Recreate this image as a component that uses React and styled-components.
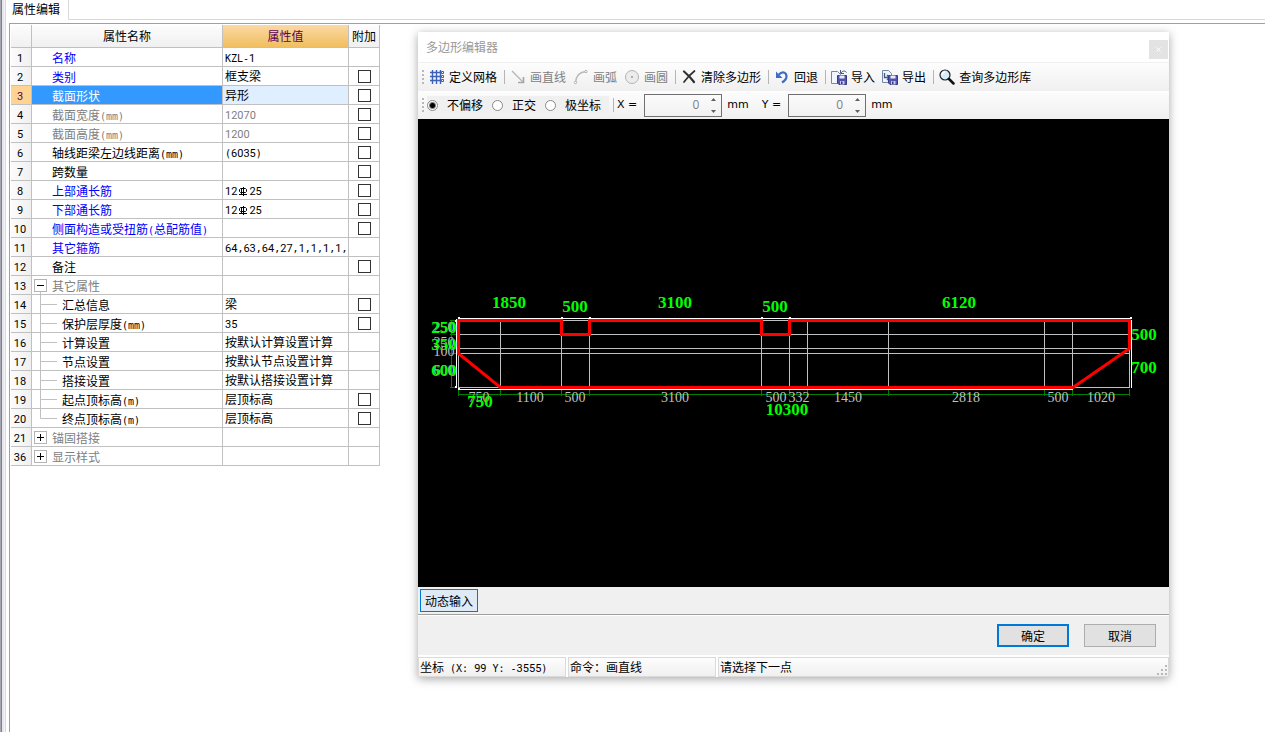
import React from "react";
import styled, { createGlobalStyle, css } from "styled-components";

const Global = createGlobalStyle`
  *, *::before, *::after { box-sizing: border-box; }
  body {
    margin: 0;
    background: #fff;
    color: #000;
    font: 12px/18px "Noto Sans CJK SC", sans-serif;
  }
  button, input { font: inherit; color: inherit; }
`;

const line = "#c0c0c0";

/* ---------- mixed Chinese / half-width text ---------- */

const Digits = styled.span`
  font-family: Roboto, sans-serif;
  font-size: 11px;
  line-height: 1;
`;

const Half = styled.span`
  font-family: "DejaVu Sans Mono", monospace;
  font-size: 10px;
  line-height: 1;
  white-space: pre;
`;

function Mixed({ children }) {
  return String(children)
    .split(/([0-9]+|Φ|[ -/:-~]+)/)
    .filter(Boolean)
    .map((part, i) => {
      if (part === "Φ") return <Rebar key={i} />;
      if (/^[0-9]/.test(part)) return <Digits key={i}>{part}</Digits>;
      if (/^[ -~]/.test(part)) return <Half key={i}>{part}</Half>;
      return part;
    });
}

const RebarSvg = styled.svg`
  vertical-align: -1px;
  margin: 0 1px;
`;

function Rebar() {
  return (
    <RebarSvg width="10" height="9" viewBox="0 0 10 9" fill="none" stroke="#000" role="img" aria-label="钢筋级别">
      <path d="M2.5 1.5h5l1 1v2l-1 1h-5l-1-1v-2z" />
      <path d="M5.5 0v9M3.5 2v6M1 7.5h8" />
    </RebarSvg>
  );
}

/* ---------- page frame ---------- */

const Page = styled.div`
  min-height: 100vh;
  display: flex;
`;

const Edge = styled.div`
  width: 6px;
  flex: none;
  background: linear-gradient(90deg, #a5a5ae 0 1px, #7f828c 1px 2px, #e6e6f0 2px 4px, #f4f4f8 4px 5px, #d9d9d9 5px 6px);
`;

const Main = styled.div`
  flex: 1;
  min-width: 0;
  display: flex;
  flex-direction: column;
`;

const TabBar = styled.div`
  display: flex;
  height: 20px;
  &::after {
    content: "";
    flex: 1;
    border-bottom: 1px solid #d9d9d9;
  }
`;

const Tab = styled.div`
  width: 63px;
  padding-left: 6px;
  border-right: 1px solid #d9d9d9;
`;

const Panel = styled.div`
  flex: 1;
  margin: 3px 0 0 3px;
  padding: 1px 0 0 1px;
  border-top: 1px solid #a0a0a0;
  border-left: 1px solid #a0a0a0;
  display: flex;
  align-items: flex-start;
`;

/* ---------- property table ---------- */

const Table = styled.table`
  flex: none;
  width: 369px;
  table-layout: fixed;
  border-collapse: separate;
  border-spacing: 0;
`;

const Col = styled.col`
  width: ${(p) => p.$w}px;
`;

const cell = css`
  height: 19px;
  padding: 0;
  border-right: 1px solid ${line};
  border-bottom: 1px solid ${line};
  font-weight: 400;
  line-height: 18px;
  white-space: nowrap;
  overflow: hidden;
`;

const HeadCell = styled.th`
  ${cell}
  height: 23px;
  background: linear-gradient(#fdfdfd, #f0f0f0);
  ${(p) =>
    p.$active &&
    css`
      background: linear-gradient(#fad9a3, #f1be5f);
      color: #5a005a;
    `}
`;

const NumCell = styled.th`
  ${cell}
  padding-right: 2px;
  background: ${(p) => (p.$active ? "#ffd391" : "linear-gradient(90deg, #fcfcfc, #f0f0f0)")};
  color: ${(p) => (p.$active ? "#5a005a" : "#000")};
`;

const tones = { blue: "#0000ff", gray: "#808080", black: "#000" };

const NameCell = styled.td`
  ${cell}
  color: ${(p) => (p.$active ? "#fff" : tones[p.$tone])};
  background: ${(p) => (p.$active ? "#3399ff" : "#fff")};
`;

const NameLine = styled.div`
  display: flex;
  height: 18px;
  padding-left: ${(p) => (p.$plain ? 20 : 0)}px;
  line-height: 20px;
`;

const ValueCell = styled.td`
  ${cell}
  padding-left: 2px;
  color: ${(p) => (p.$tone === "gray" ? "#808080" : "#000")};
  background: ${(p) => (p.$active ? "#dfefff" : "#fff")};
`;

const CheckCell = styled.td`
  ${cell}
  text-align: center;
`;

const Check = styled.input`
  appearance: none;
  display: block;
  width: 13px;
  height: 13px;
  margin: 0 auto;
  border: 1px solid #333;
  background: #fff;
`;

const Toggle = styled.button`
  flex: none;
  width: 20px;
  height: 18px;
  padding: 0;
  border: 0;
  background: none;
  svg { display: block; }
`;

const Branch = styled.svg`
  flex: none;
`;

const rows = [
  { n: 1, name: "名称", value: "KZL-1", tone: "blue" },
  { n: 2, name: "类别", value: "框支梁", tone: "blue", check: true },
  { n: 3, name: "截面形状", value: "异形", tone: "blue", check: true, active: true },
  { n: 4, name: "截面宽度(mm)", value: "12070", tone: "gray", check: true },
  { n: 5, name: "截面高度(mm)", value: "1200", tone: "gray", check: true },
  { n: 6, name: "轴线距梁左边线距离(mm)", value: "(6035)", check: true },
  { n: 7, name: "跨数量", value: "", check: true },
  { n: 8, name: "上部通长筋", value: "12Φ25", tone: "blue", check: true },
  { n: 9, name: "下部通长筋", value: "12Φ25", tone: "blue", check: true },
  { n: 10, name: "侧面构造或受扭筋(总配筋值)", value: "", tone: "blue", check: true },
  { n: 11, name: "其它箍筋", value: "64,63,64,27,1,1,1,1,", tone: "blue" },
  { n: 12, name: "备注", value: "", check: true },
  { n: 13, name: "其它属性", value: "", tone: "gray", toggle: "open" },
  { n: 14, name: "汇总信息", value: "梁", check: true, branch: "mid" },
  { n: 15, name: "保护层厚度(mm)", value: "35", check: true, branch: "mid" },
  { n: 16, name: "计算设置", value: "按默认计算设置计算", branch: "mid" },
  { n: 17, name: "节点设置", value: "按默认节点设置计算", branch: "mid" },
  { n: 18, name: "搭接设置", value: "按默认搭接设置计算", branch: "mid" },
  { n: 19, name: "起点顶标高(m)", value: "层顶标高", check: true, branch: "mid" },
  { n: 20, name: "终点顶标高(m)", value: "层顶标高", check: true, branch: "end" },
  { n: 21, name: "锚固搭接", value: "", tone: "gray", toggle: "closed" },
  { n: 36, name: "显示样式", value: "", tone: "gray", toggle: "closed" },
];

function TreeToggle({ state, label }) {
  const open = state === "open";
  return (
    <Toggle type="button" aria-label={label} aria-expanded={open}>
      <svg width="20" height="18" fill="none">
        <rect x="2.5" y="3.5" width="12" height="12" fill="#fff" stroke="#b4b4b4" />
        <path d={open ? "M5 9.5h7" : "M5 9.5h7M8.5 6v7"} stroke="#000" />
        {open && <path d="M8.5 16v2" stroke={line} />}
      </svg>
    </Toggle>
  );
}

function PropertyRow({ row }) {
  const { n, name, value, tone = "black", check, active, toggle, branch } = row;
  return (
    <tr>
      <NumCell scope="row" $active={active}>
        <Mixed>{n}</Mixed>
      </NumCell>
      <NameCell $tone={tone} $active={active}>
        <NameLine $plain={!toggle && !branch}>
          {toggle && <TreeToggle state={toggle} label={name} />}
          {branch && (
            <Branch width="30" height="18" stroke={line} fill="none">
              <path d={branch === "end" ? "M8.5 0v9.5h16.5" : "M8.5 0v18M8.5 9.5h16.5"} />
            </Branch>
          )}
          <span>
            <Mixed>{name}</Mixed>
          </span>
        </NameLine>
      </NameCell>
      <ValueCell $tone={tone} $active={active}>
        <Mixed>{value}</Mixed>
      </ValueCell>
      <CheckCell>{check && <Check type="checkbox" aria-label={`附加 ${name}`} />}</CheckCell>
    </tr>
  );
}

/* ---------- dialog ---------- */

const Dialog = styled.section`
  flex: 1;
  min-width: 0;
  margin: 7px 96px 24px 38px;
  background: #f0f0f0;
  box-shadow: 0 2px 9px rgba(0, 0, 0, 0.35);
`;

const TitleBar = styled.header`
  display: flex;
  justify-content: space-between;
  align-items: center;
  height: 31px;
  padding: 0 1px 0 8px;
  background: #fff;
  color: #999;
  border-bottom: 1px solid #f0f0f0;
`;

const CloseButton = styled.button`
  align-self: flex-end;
  width: 19px;
  height: 19px;
  margin-bottom: 3px;
  padding: 0;
  border: 0;
  background: #e3e3e3;
  svg { display: block; margin: auto; }
`;

const ToolBar = styled.div`
  display: flex;
  align-items: center;
  height: 28px;
  padding-left: 4px;
  background: linear-gradient(#fdfdfd, #efefef);
  white-space: nowrap;
`;

const Grip = styled.span`
  width: 2px;
  height: 14px;
  margin-right: ${(p) => p.$gap}px;
  background: repeating-linear-gradient(#b8b8b8 0 2px, transparent 2px 4px);
`;

const Tool = styled.button`
  display: flex;
  align-items: center;
  gap: 4px;
  height: 24px;
  padding: 0 3px 0 4px;
  border: 0;
  background: none;
  color: ${(p) => (p.disabled ? "#808080" : "#000")};
  svg { flex: none; }
`;

const Separator = styled.span`
  width: 1px;
  height: 14px;
  margin: 0 1px 0 4px;
  background: #b5b5b5;
`;

const RadioGroup = styled.div`
  display: flex;
  align-items: center;
  width: 182px;
  height: 18px;
  background: #f0f0f0;
`;

const RadioLabel = styled.label`
  display: flex;
  align-items: center;
  gap: 9px;
  padding-right: 9px;
`;

const Radio = styled.input`
  appearance: none;
  flex: none;
  width: 11px;
  height: 11px;
  margin: 0;
  border: 1px solid #888;
  border-radius: 50%;
  background: #fff;
  &:checked { background: radial-gradient(#000 0 2px, #fff 4px); }
`;

const Unit = styled.span`
  font: 11px/18px "DejaVu Sans", sans-serif;
  padding: 0 ${(p) => (p.$wide ? 11 : 7)}px 0 ${(p) => (p.$wide ? 5 : 2)}px;
`;

const NumberLabel = styled.label`
  display: flex;
  align-items: center;
`;

const Spin = styled.span`
  display: flex;
  align-items: center;
  width: 78px;
  height: 23px;
  padding-right: 4px;
  border: 1px solid #707070;
  background: linear-gradient(#fbfbfb, #f1f1f1);
`;

const SpinInput = styled.input`
  flex: 1;
  min-width: 0;
  height: 20px;
  padding: 0 11px 0 0;
  border: 0;
  outline: 0;
  background: none;
  color: #808080;
  font: 12px/20px "Open Sans", sans-serif;
  text-align: right;
`;

const Canvas = styled.svg`
  display: block;
  width: 100%;
  height: auto;
  background: #000;
`;

const DimText = styled.text`
  font: bold 17px "Liberation Serif", serif;
  fill: #0f0;
  text-anchor: middle;
`;

const GridText = styled.text`
  font: 14px "Liberation Serif", serif;
  fill: #c0c0c0;
  text-anchor: middle;
`;

const InputBar = styled.div`
  height: 28px;
  padding: 2px;
  border-bottom: 1px solid #a0a0a0;
`;

const DynamicButton = styled.button`
  display: block;
  width: 58px;
  height: 23px;
  padding: 0;
  border: 1px solid #0078d7;
  background: #deebf7;
`;

const Footer = styled.footer`
  display: flex;
  justify-content: flex-end;
  gap: 15px;
  padding: 8px 13px 8px;
  border-top: 1px solid #fff;
`;

const DialogButton = styled.button`
  width: 72px;
  height: 23px;
  padding: 0;
  background: #e1e1e1;
  border: ${(p) => (p.$primary ? "2px solid #0078d7" : "1px solid #adadad")};
`;

const StatusBar = styled.div`
  display: flex;
  gap: 2px;
  height: 22px;
  padding-top: 2px;
  background: #fff;
`;

const StatusItem = styled.div`
  flex: ${(p) => (p.$fill ? "1" : "0 0 148px")};
  display: flex;
  justify-content: space-between;
  align-items: flex-end;
  padding-left: 1px;
  border: 1px solid #dadada;
  background: linear-gradient(#fdfdfd, #f0f0f0);
  white-space: nowrap;
`;

/* ---------- icons ---------- */

const Icon = ({ children }) => (
  <svg width="16" height="16" viewBox="0 0 16 16" fill="none" aria-hidden="true">
    {children}
  </svg>
);

const GridIcon = () => (
  <Icon>
    <path d="M3.5 1v14M7.5 1v14M11.5 1v14M1 3.5h14M1 7.5h14M1 11.5h14" stroke="#3b62b5" strokeWidth="1.4" />
    <path d="M12.5 2.5h2v2h-2zM12.5 6.5h2v2h-2zM12.5 10.5h2v2h-2z" fill="#fff" stroke="#3b62b5" />
  </Icon>
);

const LineIcon = () => (
  <Icon>
    <path d="M2 2l11 11" stroke="#b4b4b4" strokeWidth="1.3" />
    <path d="M13.5 8v5.500H8" stroke="#a6a6a6" strokeWidth="1.6" />
  </Icon>
);

const ArcIcon = () => (
  <Icon>
    <path d="M2.5 13.5C3 7 6.5 3 13 2.5" stroke="#b8b8b8" strokeWidth="1.3" />
    <circle cx="2.5" cy="13.5" r="1.2" fill="#fff" stroke="#b0b0b0" />
    <circle cx="13" cy="2.5" r="1.2" fill="#fff" stroke="#b0b0b0" />
  </Icon>
);

const CircleIcon = () => (
  <Icon>
    <circle cx="8" cy="8" r="6.5" fill="#ececec" stroke="#b4b4b4" />
    <circle cx="8" cy="8" r="1" fill="#999" />
  </Icon>
);

const ClearIcon = () => (
  <Icon>
    <path d="M3 2.5C6 5 10 9 13 13" stroke="#303030" strokeWidth="2.2" strokeLinecap="round" />
    <path d="M13.5 2C9 5.5 6 9 3 13" stroke="#303030" strokeWidth="1.7" strokeLinecap="round" />
  </Icon>
);

const UndoIcon = () => (
  <Icon>
    <path d="M5 5.5C8 2 12.5 3 12.5 7.5c0 2.5-2 4.5-4.5 6" stroke="#3f6cc4" strokeWidth="2.2" />
    <path d="M2 2.5V9h6.5z" fill="#3f6cc4" />
  </Icon>
);

const Disk = () => (
  <>
    <path d="M6.5 6.5h9v9h-7.5l-1.5-1.5z" fill="#5355ad" stroke="#363a85" />
    <path d="M8.5 6.5h5v3h-5z" fill="#e9ebfb" />
    <path d="M9 12h4.5v3.5H9z" fill="#c5c8e6" />
    <path d="M10 12.5h1.5v2.5H10z" fill="#363a85" />
  </>
);

const ImportIcon = () => (
  <Icon>
    <path d="M.5 2.5h6l3 3v9h-9z" fill="#f2f7ff" stroke="#7488a8" />
    <Disk />
    <path d="M9.5 1v3.5H13M10 4C11.5 1.5 14 1.5 15.5 3.5" stroke="#445a80" />
  </Icon>
);

const ExportIcon = () => (
  <Icon>
    <path d="M.5 1.5h6l3 3v9h-9z" fill="#eef5ff" stroke="#7488a8" />
    <path d="M2.5 4v4.5h4M5 6l2.5 2.5L5 11" stroke="#445a80" strokeWidth="1.3" />
    <Disk />
  </Icon>
);

const SearchIcon = () => (
  <Icon>
    <circle cx="6" cy="6" r="5" fill="#d5edfa" stroke="#222" strokeWidth="1.2" />
    <path d="M3 6a3 3 0 0 1 3-3" stroke="#fff" strokeWidth="1.5" />
    <path d="M10 10l4.5 4.5" stroke="#111" strokeWidth="2.5" strokeLinecap="round" />
  </Icon>
);

/* ---------- drawing ---------- */

const gridX = [458.5, 500.5, 561.5, 589.5, 761.5, 789.5, 807.5, 888.5, 1044.5, 1072.5, 1129.5];
const gridY = [320.5, 334.5, 348.5, 353.5, 387.5];
const cornerX = [458, 561, 589, 761, 789, 1130];

const gridLabels = [
  [479, 402, "750"], [530, 402, "1100"], [575, 402, "500"], [675, 402, "3100"],
  [776, 402, "500"], [799, 402, "332"], [848, 402, "1450"], [966, 402, "2818"],
  [1058, 402, "500"], [1101, 402, "1020"],
  [444, 332, "250"], [444, 347, "250"], [444, 356, "100"], [444, 375, "600"],
];

const dimLabels = [
  [509, 308, "1850"], [575, 312, "500"], [675, 308, "3100"], [775, 312, "500"],
  [959, 308, "6120"], [444, 333, "250"], [444, 350, "350"], [444, 376, "600"],
  [1144, 340, "500"], [1144, 373, "700"], [480, 407, "750"], [787, 415, "10300"],
];

function SectionDrawing() {
  return (
    <Canvas viewBox="418 119 751 468" role="img" aria-label="异形截面">
      <g stroke="#c0c0c0">
        {gridX.map((x) => <path key={x} d={`M${x} 320V388`} />)}
        {gridY.map((y) => <path key={y} d={`M458 ${y}H1130`} />)}
      </g>
      <g stroke="#008000" fill="none">
        <path d="M458 394.5H1130M451.5 320V388" />
        {gridX.map((x) => <path key={x} d={`M${x} 389V396`} />)}
        {gridY.map((y) => <path key={y} d={`M450 ${y}H456`} />)}
      </g>
      <path d="M458 318.5H1131M456.5 319V388M458 389.5H1073M1131.5 320V388" stroke="#fff" />
      <g fill="#fff">
        {cornerX.map((x) => <rect key={x} x={x} y="317" width="2" height="2" />)}
        <rect x="455" y="320" width="2" height="2" />
        <rect x="455" y="386" width="2" height="2" />
        <rect x="458" y="388" width="2" height="2" />
      </g>
      {gridLabels.map(([x, y, t]) => <GridText key={`${x}-${y}`} x={x} y={y}>{t}</GridText>)}
      <path
        d="M458.5 320.5H561.5V334.5H589.5V320.5H761.5V334.5H789.5V320.5H1129.5V348.5L1073 387.5H500.5L458.5 353.5Z"
        fill="none"
        stroke="#f00"
        strokeWidth="3"
      />
      <path d="M563 318.5H588M763 318.5H788" stroke="#fff" />
      {dimLabels.map(([x, y, t]) => <DimText key={`${x}-${y}`} x={x} y={y}>{t}</DimText>)}
    </Canvas>
  );
}

function SpinBox({ label }) {
  return (
    <NumberLabel>
      <Unit>{label} =</Unit>
      <Spin>
        <SpinInput defaultValue="0" />
        <svg width="7" height="17" fill="#606060" aria-hidden="true">
          <path d="M1 4L3.5 1L6 4zM1 13h5L3.5 16z" />
        </svg>
      </Spin>
      <Unit $wide>mm</Unit>
    </NumberLabel>
  );
}

function PolygonDialog() {
  return (
    <Dialog role="dialog" aria-label="多边形编辑器">
      <TitleBar>
        多边形编辑器
        <CloseButton type="button" aria-label="关闭">
          <svg width="5" height="5" stroke="#fff">
            <path d="M.5.5l4 4M4.5.5l-4 4" />
          </svg>
        </CloseButton>
      </TitleBar>
      <ToolBar>
        <Grip $gap={1} />
        <Tool type="button"><GridIcon />定义网格</Tool>
        <Separator />
        <Tool type="button" disabled><LineIcon />画直线</Tool>
        <Tool type="button" disabled><ArcIcon />画弧</Tool>
        <Tool type="button" disabled><CircleIcon />画圆</Tool>
        <Separator />
        <Tool type="button"><ClearIcon />清除多边形</Tool>
        <Separator />
        <Tool type="button"><UndoIcon />回退</Tool>
        <Separator />
        <Tool type="button"><ImportIcon />导入</Tool>
        <Tool type="button"><ExportIcon />导出</Tool>
        <Separator />
        <Tool type="button"><SearchIcon />查询多边形库</Tool>
      </ToolBar>
      <ToolBar>
        <Grip $gap={3} />
        <RadioGroup role="radiogroup" aria-label="偏移方式">
          <RadioLabel><Radio type="radio" name="offset" defaultChecked />不偏移</RadioLabel>
          <RadioLabel><Radio type="radio" name="offset" />正交</RadioLabel>
          <RadioLabel><Radio type="radio" name="offset" />极坐标</RadioLabel>
        </RadioGroup>
        <Separator />
        <SpinBox label="X" />
        <SpinBox label="Y" />
      </ToolBar>
      <SectionDrawing />
      <InputBar>
        <DynamicButton type="button">动态输入</DynamicButton>
      </InputBar>
      <Footer>
        <DialogButton type="button" $primary>确定</DialogButton>
        <DialogButton type="button">取消</DialogButton>
      </Footer>
      <StatusBar>
        <StatusItem><span><Mixed>{"坐标 (X: 99 Y: -3555)"}</Mixed></span></StatusItem>
        <StatusItem>命令：画直线</StatusItem>
        <StatusItem $fill>
          请选择下一点
          <svg width="13" height="13" fill="#b8b8b8" aria-hidden="true">
            <path d="M10 2h2v2h-2zM6 6h2v2H6zM10 6h2v2h-2zM2 10h2v2H2zM6 10h2v2H6zM10 10h2v2h-2z" />
          </svg>
        </StatusItem>
      </StatusBar>
    </Dialog>
  );
}

export default function App() {
  return (
    <>
      <Global />
      <Page>
        <Edge />
        <Main>
          <TabBar>
            <Tab>属性编辑</Tab>
          </TabBar>
          <Panel>
            <Table>
              <colgroup>
                <Col $w={21} />
                <Col $w={191} />
                <Col $w={126} />
                <Col $w={31} />
              </colgroup>
              <thead>
                <tr>
                  <HeadCell aria-label="序号" />
                  <HeadCell scope="col">属性名称</HeadCell>
                  <HeadCell scope="col" $active>属性值</HeadCell>
                  <HeadCell scope="col">附加</HeadCell>
                </tr>
              </thead>
              <tbody>
                {rows.map((row) => <PropertyRow key={row.n} row={row} />)}
              </tbody>
            </Table>
            <PolygonDialog />
          </Panel>
        </Main>
      </Page>
    </>
  );
}
